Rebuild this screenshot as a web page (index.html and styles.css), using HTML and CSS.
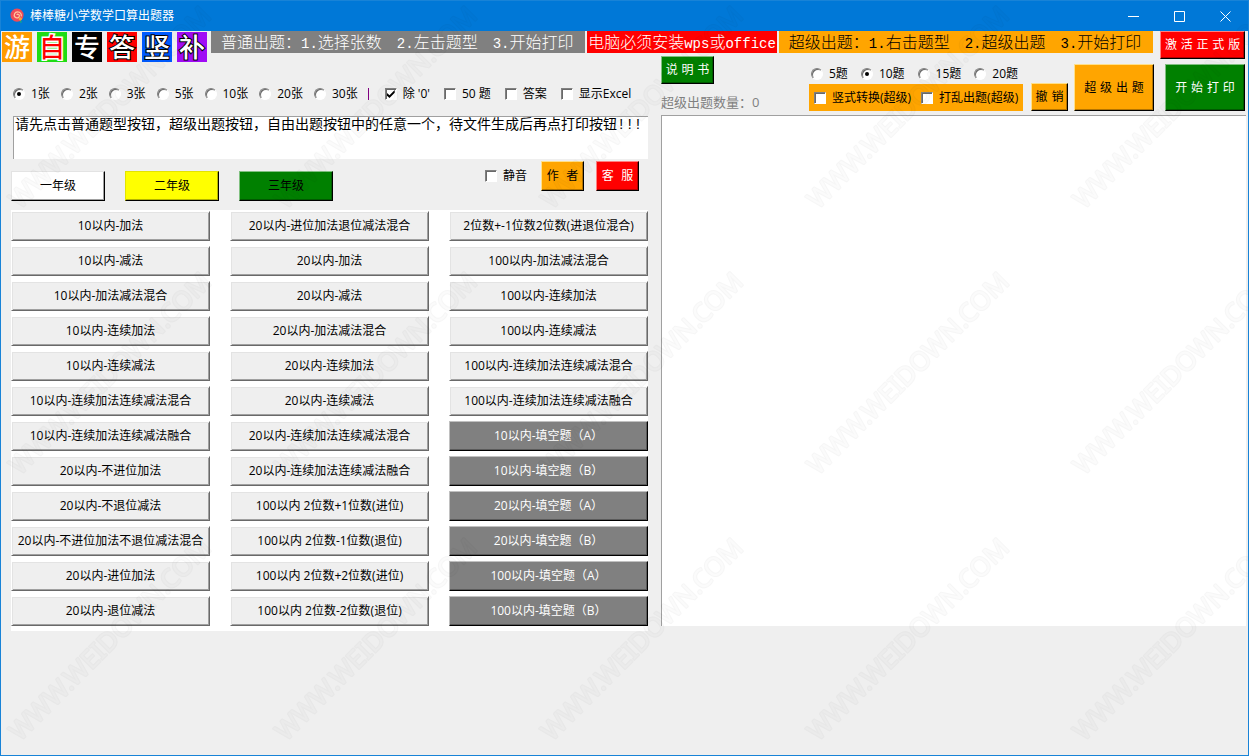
FILE: index.html
```html
<!DOCTYPE html>
<html lang="zh-CN">
<head>
<meta charset="utf-8">
<title>棒棒糖小学数学口算出题器</title>
<link rel="stylesheet" href="styles.css">
</head>
<body>
<div class="window">
  <header class="titlebar">
    <svg class="app-icon" viewBox="0 0 16 16" aria-hidden="true">
      <path d="M10 11l2 4" stroke="#12a38c" stroke-width="2"/>
      <circle cx="7.500" cy="7" r="7" fill="#ef4b57"/>
      <path d="M7.500 7c0-1.500 2.500-1 2.500.8 0 2.200-3 3-4.700 1.300C3.500 7 5 3.500 8 3.500c3 0 4.500 2.500 4 5" fill="none" stroke="#ffc9a0" stroke-width="1.300"/>
      <circle cx="11" cy="11" r="1.800" fill="#f8a13f"/>
    </svg>
    <h1 class="title">棒棒糖小学数学口算出题器</h1>
    <div class="controls">
      <button class="control" aria-label="最小化"><svg viewBox="0 0 11 11"><path d="M0 5.500h11"/></svg></button>
      <button class="control" aria-label="最大化"><svg viewBox="0 0 11 11"><path d="M.5.5h10v10H.5z"/></svg></button>
      <button class="control" aria-label="关闭"><svg viewBox="0 0 11 11"><path d="M.5.5l10 10M10.500.5l-10 10"/></svg></button>
    </div>
  </header>

  <nav class="toolbar">
    <div class="tiles">
      <button class="tile tile-game">游</button>
      <button class="tile tile-free">自</button>
      <button class="tile tile-topic">专</button>
      <button class="tile tile-answer">答</button>
      <button class="tile tile-column">竖</button>
      <button class="tile tile-fill">补</button>
    </div>
    <p class="guide guide-normal"><span class="guide-name">普通出题：</span><span class="step"><span class="latin">1.</span>选择张数</span><span class="step"><span class="latin">2.</span>左击题型</span><span class="step"><span class="latin">3.</span>开始打印</span></p>
    <p class="guide guide-warning">电脑必须安装<span class="latin">wps</span>或<span class="latin">office</span></p>
    <p class="guide guide-super"><span class="guide-name">超级出题：</span><span class="step"><span class="latin">1.</span>右击题型</span><span class="step"><span class="latin">2.</span>超级出题</span><span class="step"><span class="latin">3.</span>开始打印</span></p>
    <button class="btn spaced red activate">激 活 正 式 版</button>
  </nav>

  <main class="body">
    <section class="pane">
      <div class="options">
        <div class="choices">
          <label class="choice"><input type="radio" name="sheets" checked>1张</label>
          <label class="choice"><input type="radio" name="sheets">2张</label>
          <label class="choice"><input type="radio" name="sheets">3张</label>
          <label class="choice"><input type="radio" name="sheets">5张</label>
          <label class="choice"><input type="radio" name="sheets">10张</label>
          <label class="choice"><input type="radio" name="sheets">20张</label>
          <label class="choice"><input type="radio" name="sheets">30张</label>
        </div>
        <span class="divider"></span>
        <div class="choices checks">
          <label class="choice"><input type="checkbox" checked>除 '0'</label>
          <label class="choice"><input type="checkbox">50 题</label>
          <label class="choice"><input type="checkbox">答案</label>
          <label class="choice"><input type="checkbox">显示Excel</label>
        </div>
      </div>
      <textarea class="message" aria-label="提示">请先点击普通题型按钮，超级出题按钮，自由出题按钮中的任意一个，待文件生成后再点打印按钮!!!</textarea>
      <div class="actions">
        <div class="grades">
          <button class="btn grade white">一年级</button>
          <button class="btn grade yellow">二年级</button>
          <button class="btn grade green-dark-text">三年级</button>
        </div>
        <div class="extras">
          <label class="choice"><input type="checkbox">静音</label>
          <button class="btn spaced orange contact">作&nbsp; 者</button>
          <button class="btn spaced red contact">客&nbsp; 服</button>
        </div>
      </div>
      <div class="topics">
        <button class="btn">10以内-加法</button>
        <button class="btn">20以内-进位加法退位减法混合</button>
        <button class="btn">2位数+-1位数2位数(进退位混合)</button>
        <button class="btn">10以内-减法</button>
        <button class="btn">20以内-加法</button>
        <button class="btn">100以内-加法减法混合</button>
        <button class="btn">10以内-加法减法混合</button>
        <button class="btn">20以内-减法</button>
        <button class="btn">100以内-连续加法</button>
        <button class="btn">10以内-连续加法</button>
        <button class="btn">20以内-加法减法混合</button>
        <button class="btn">100以内-连续减法</button>
        <button class="btn">10以内-连续减法</button>
        <button class="btn">20以内-连续加法</button>
        <button class="btn">100以内-连续加法连续减法混合</button>
        <button class="btn">10以内-连续加法连续减法混合</button>
        <button class="btn">20以内-连续减法</button>
        <button class="btn">100以内-连续加法连续减法融合</button>
        <button class="btn">10以内-连续加法连续减法融合</button>
        <button class="btn">20以内-连续加法连续减法混合</button>
        <button class="btn gray">10以内-填空题（A）</button>
        <button class="btn">20以内-不进位加法</button>
        <button class="btn">20以内-连续加法连续减法融合</button>
        <button class="btn gray">10以内-填空题（B）</button>
        <button class="btn">20以内-不退位减法</button>
        <button class="btn">100以内 2位数+1位数(进位)</button>
        <button class="btn gray">20以内-填空题（A）</button>
        <button class="btn">20以内-不进位加法不退位减法混合</button>
        <button class="btn">100以内 2位数-1位数(退位)</button>
        <button class="btn gray">20以内-填空题（B）</button>
        <button class="btn">20以内-进位加法</button>
        <button class="btn">100以内 2位数+2位数(进位)</button>
        <button class="btn gray">100以内-填空题（A）</button>
        <button class="btn">20以内-退位减法</button>
        <button class="btn">100以内 2位数-2位数(退位)</button>
        <button class="btn gray">100以内-填空题（B）</button>
      </div>
    </section>

    <section class="pane">
      <div class="super">
        <div class="super-info">
          <button class="btn spaced green manual">说 明 书</button>
          <p class="count">超级出题数量：0</p>
        </div>
        <div class="super-options">
          <div class="choices amounts">
            <label class="choice"><input type="radio" name="amount">5题</label>
            <label class="choice"><input type="radio" name="amount" checked>10题</label>
            <label class="choice"><input type="radio" name="amount">15题</label>
            <label class="choice"><input type="radio" name="amount">20题</label>
          </div>
          <div class="super-flags">
            <label class="choice"><input type="checkbox">竖式转换(超级)</label>
            <label class="choice"><input type="checkbox">打乱出题(超级)</label>
          </div>
        </div>
        <button class="btn spaced orange undo">撤 销</button>
        <button class="btn spaced orange big">超 级 出 题</button>
        <button class="btn spaced green big print">开 始 打 印</button>
      </div>
      <textarea class="preview" aria-label="超级出题列表"></textarea>
    </section>
  </main>

  <svg class="watermark" aria-hidden="true">
    <defs>
      <mask id="hollow" maskUnits="userSpaceOnUse" x="0" y="0" width="266" height="266">
        <g transform="translate(19 212) rotate(-45)">
          <text class="mark-text mark-outer">WWW.WEIDOWN.COM</text>
          <text class="mark-text mark-inner">WWW.WEIDOWN.COM</text>
        </g>
      </mask>
      <pattern id="mark" y="-2" width="266" height="266" patternUnits="userSpaceOnUse">
        <rect class="mark-ink" width="266" height="266" mask="url(#hollow)"/>
      </pattern>
    </defs>
    <rect width="100%" height="100%" fill="url(#mark)"/>
  </svg>
</div>
</body>
</html>
```
FILE: styles.css
```css
* {
  box-sizing: border-box;
}

body {
  margin: 0;
  color: #000;
  font: 12px/16px "Open Sans", "Noto Sans CJK SC", sans-serif;
}

h1,
p {
  margin: 0;
}

button,
textarea {
  color: inherit;
  font: inherit;
}

.window {
  position: relative;
  display: flex;
  flex-direction: column;
  min-width: 1200px;
  min-height: 100vh;
  background: #efefef;
  border: 1px solid #1883d7;
  border-top: 0;
}

/* Title bar */
.titlebar {
  display: flex;
  align-items: center;
  height: 31px;
  padding-left: 9px;
  background: #0078d7;
  border-top: 1px solid #1883d7;
  color: #fff;
}

.app-icon {
  width: 15px;
  height: 16px;
  margin-right: 5px;
}

.title {
  flex: 1;
  font-size: 12px;
  font-weight: 400;
}

.controls {
  display: flex;
}

.control {
  display: grid;
  place-items: center;
  width: 46px;
  height: 28px;
  padding: 0;
  border: 0;
  background: none;
}

.control svg {
  width: 11px;
  height: 11px;
  fill: none;
  stroke: #fff;
}

/* Toolbar */
.toolbar {
  display: flex;
  align-items: flex-start;
  gap: 2px;
  padding: 0 3px 0 1px;
}

.tiles {
  display: flex;
  gap: 5px;
  margin-right: 2px;
  padding-top: 1px;
}

.tile {
  width: 30px;
  height: 30px;
  padding: 0;
  border: 0;
  color: #fff;
  font-size: 26px;
  font-weight: 500;
  line-height: 28px;
  paint-order: stroke fill;
}

.tile-game {
  background: #ff9c00;
}

.tile-free {
  background: #1edc14;
  color: #f00;
  -webkit-text-stroke: 3px #fff;
}

.tile-topic {
  background: #000;
}

.tile-answer {
  background: #f00;
  -webkit-text-stroke: 2px #000;
}

.tile-column {
  background: #005aff;
  -webkit-text-stroke: 2px #000;
}

.tile-fill {
  background: #a00af5;
  -webkit-text-stroke: 2px #000;
}

.guide {
  height: 22px;
  font-size: 16px;
  font-weight: 300;
  line-height: 22px;
  white-space: nowrap;
}

.guide-normal,
.guide-super {
  display: flex;
  flex: 1;
  gap: 15px;
  padding-left: 10px;
}

.guide-name {
  margin-right: -15px;
}

.guide-normal {
  background: #808080;
  color: #fff;
}

.guide-warning {
  padding: 0 1px;
  background: #f00;
  color: #fff;
}

.guide-super {
  background: #ffa500;
}

.latin {
  font-family: "Liberation Mono", monospace;
  font-size: 14px;
}

/* Buttons */
.btn {
  height: 30px;
  padding: 0;
  background: #efefef;
  border: 1px solid;
  border-color: #fff #696969 #696969 #fff;
  box-shadow: inset 1px 1px #e3e3e3, inset -1px -1px #a0a0a0;
  white-space: nowrap;
}

.spaced {
  font-family: "DejaVu Sans", "Noto Sans CJK SC", sans-serif;
}

.white {
  background: #fff;
  border-color: #e3e3e3 #000 #000 #e3e3e3;
  box-shadow: inset -1px -1px #a0a0a0;
}

.yellow {
  background: #ff0;
  border-color: #e3e300 #000 #000 #e3e300;
  box-shadow: inset -1px -1px #b4b400;
}

.orange {
  background: #ffa500;
  border-color: #ffe08a #000 #000 #ffe08a;
  box-shadow: inset -1px -1px #b47400;
}

.red {
  background: #f00;
  border-color: #ff8080 #000 #000 #ff8080;
  box-shadow: inset -1px -1px #b40000;
  color: #fff;
}

.green,
.green-dark-text {
  background: #008000;
  border-color: #80c080 #000 #000 #80c080;
  box-shadow: inset -1px -1px #005a00;
}

.green {
  color: #fff;
}

.gray {
  background: #808080;
  border-color: #c0c0c0 #000 #000 #c0c0c0;
  box-shadow: inset -1px -1px #5a5a5a;
  color: #fff;
}

.activate {
  width: 85px;
  height: 28px;
  margin-left: 5px;
}

/* Radios and tick boxes */
.choices {
  display: flex;
  gap: 11px;
}

.choice {
  display: flex;
  align-items: center;
  gap: 6px;
  white-space: nowrap;
}

.choice input {
  display: grid;
  place-items: center;
  width: 12px;
  height: 12px;
  margin: 0;
  appearance: none;
  background: #fff;
  border: 1px solid;
  border-color: #808080 #fff #fff #808080;
  box-shadow: inset 1px 1px #696969;
}

.choice input[type="radio"] {
  border-radius: 50%;
}

.choice input[type="radio"]:checked::before {
  content: "";
  width: 4px;
  height: 4px;
  background: #000;
  border-radius: 50%;
}

.choice input[type="checkbox"]:checked::before {
  content: "";
  width: 8px;
  height: 8px;
  background: #000;
  clip-path: polygon(0 35%, 35% 65%, 100% 0, 100% 35%, 35% 100%, 0 70%);
}

/* Body */
.body {
  display: grid;
  grid-template-columns: 637fr 585fr;
  gap: 13px;
  margin-top: -6px;
  padding: 0 2px 0 10px;
}

.pane {
  display: flex;
  flex-direction: column;
  min-width: 0;
}

.options {
  display: flex;
  align-items: center;
  padding: 30px 0 15px 2px;
}

.divider {
  width: 1px;
  height: 12px;
  margin: 0 16px 0 10px;
  background: #800080;
}

.checks {
  gap: 14px;
}

.message,
.preview {
  display: block;
  margin: 0;
  border: 0 solid #a0a0a0;
  border-width: 1px 0 0 1px;
  border-radius: 0;
  outline: 0;
  resize: none;
  background: #fff;
}

.message {
  height: 43px;
  margin: -1px 0 0 2px;
  padding: 0 1px;
  overflow: hidden;
  font-family: "Liberation Mono", "Noto Sans CJK SC", monospace;
  font-size: 14px;
}

.actions {
  display: flex;
  justify-content: space-between;
  padding: 2px 9px 9px 0;
}

.grades {
  display: flex;
  gap: 20px;
  padding-top: 10px;
}

.grade {
  width: 94px;
}

.extras {
  display: flex;
  align-items: center;
  align-self: flex-start;
  gap: 12px;
}

.extras .choice {
  margin-right: 2px;
}

.contact {
  width: 43px;
}

.topics {
  display: grid;
  grid-template-columns: repeat(3, 1fr);
  gap: 5px 20px;
  padding: 1px 0 5px;
  background: #fff;
}

/* Right pane */
.super {
  display: flex;
  align-items: flex-end;
  height: 59px;
  padding: 0 1px 4px 0;
}

.super-info {
  flex: 1;
  align-self: flex-start;
}

.manual {
  width: 53px;
  height: 28px;
}

.count {
  padding-top: 10px;
  color: #808080;
  font-size: 13px;
}

.super-options {
  width: 214px;
  margin-right: 8px;
}

.amounts {
  gap: 13px;
  padding: 0 0 2px 2px;
}

.super-flags {
  display: flex;
  align-items: center;
  gap: 10px;
  height: 27px;
  padding-left: 5px;
  background: #ffa500;
}

.undo {
  width: 37px;
  height: 28px;
  margin-right: 6px;
}

.big {
  width: 80px;
  height: 47px;
}

.print {
  margin-left: 11px;
}

.preview {
  flex: 1;
  width: 100%;
  margin-bottom: 5px;
}

/* Diagonal watermark over the whole window */
.watermark {
  position: absolute;
  inset: 0;
  width: 100%;
  height: 100%;
  pointer-events: none;
}

.mark-text {
  font: 26px "Noto Sans", sans-serif;
  stroke-linejoin: round;
}

.mark-outer {
  fill: #fff;
  stroke: #fff;
  stroke-width: 2px;
}

.mark-inner {
  fill: #777;
}

.mark-ink {
  fill: rgba(0, 0, 0, 0.035);
}
```
